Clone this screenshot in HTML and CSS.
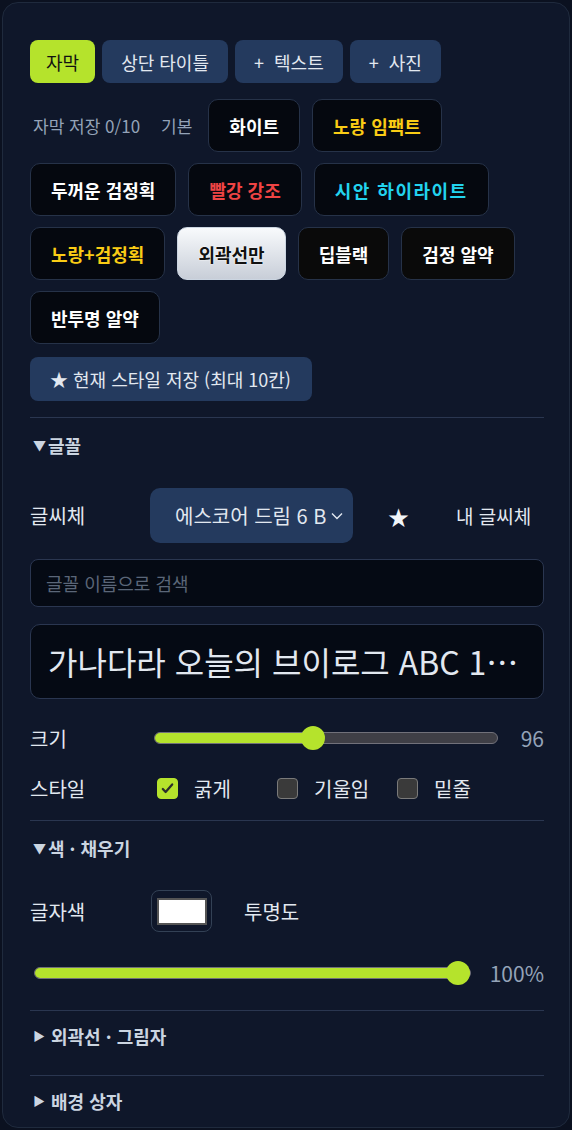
FILE: index.html
```html
<!DOCTYPE html>
<html lang="ko">
<head>
  <meta charset="UTF-8" />
  <meta name="viewport" content="width=device-width, initial-scale=1.0" />
  <title>자막 스타일</title>
  <link rel="stylesheet" href="styles.css">
</head>
<body>
  <div class="panel">
    <div class="tabs">
      <button class="tab active">자막</button>
      <button class="tab">상단 타이틀</button>
      <button class="tab">+&nbsp; 텍스트</button>
      <button class="tab">+&nbsp; 사진</button>
    </div>

    <div class="presets">
      <span class="preset-label">자막 저장 0/10</span>
      <span class="preset-label basic">기본</span>
      <button class="chip white">화이트</button>
      <button class="chip yellow">노랑 임팩트</button>
      <button class="chip white">두꺼운 검정획</button>
      <button class="chip red">빨강 강조</button>
      <button class="chip cyan">시안 하이라이트</button>
      <button class="chip yellow">노랑+검정획</button>
      <button class="chip outline">외곽선만</button>
      <button class="chip deep">딥블랙</button>
      <button class="chip deep">검정 알약</button>
      <button class="chip white">반투명 알약</button>
    </div>

    <button class="save-btn">★ 현재 스타일 저장 (최대 10칸)</button>

    <div class="section">
      <div class="section-title"><span class="caret">▼</span>글꼴</div>
      <div class="row font-row">
        <span class="label">글씨체</span>
        <div class="select">
          <span class="select-text">에스코어 드림 6 B</span>
          <svg class="chev" viewBox="0 0 12 8" width="12" height="8"><path d="M1 1.5l5 5 5-5" fill="none" stroke="#e2e8f0" stroke-width="1.4"/></svg>
        </div>
        <span class="star">★</span>
        <span class="my-font">내 글씨체</span>
      </div>
      <input class="search" type="text" placeholder="글꼴 이름으로 검색" />
      <div class="preview">가나다라 오늘의 브이로그 ABC 123</div>
      <div class="row size-row">
        <span class="label">크기</span>
        <div class="slider"><div class="fill" style="width: 46.5%"></div><div class="thumb" style="left: calc((100% - 24px) * 0.46)"></div></div>
        <span class="value">96</span>
      </div>
      <div class="row style-row">
        <span class="label">스타일</span>
        <label class="check"><span class="box on">
          <svg viewBox="0 0 16 16" width="15" height="15"><path d="M3 8.5l3 3.2 7-8" fill="none" stroke="#2b2f2b" stroke-width="2.4" stroke-linecap="round" stroke-linejoin="round"/></svg>
        </span>굵게</label>
        <label class="check"><span class="box"></span>기울임</label>
        <label class="check"><span class="box"></span>밑줄</label>
      </div>
    </div>

    <div class="section">
      <div class="section-title"><span class="caret">▼</span>색 · 채우기</div>
      <div class="row color-row">
        <span class="label">글자색</span>
        <div class="swatch"><span></span></div>
        <span class="label opacity">투명도</span>
      </div>
      <div class="row opacity-row">
        <div class="slider wide"><div class="fill" style="width: 100%"></div><div class="thumb" style="left: calc(100% - 24px)"></div></div>
        <span class="value">100%</span>
      </div>
    </div>

    <div class="section">
      <div class="section-title closed"><span class="caret">▶</span>외곽선 · 그림자</div>
    </div>

    <div class="section">
      <div class="section-title closed"><span class="caret">▶</span>배경 상자</div>
    </div>
  </div>
</body>
</html>
```

FILE: styles.css
```css
body {
  font-family: "Noto Sans CJK KR", "Noto Sans", sans-serif;
  background: #0b1120;
  margin: 0;
  padding: 2px;
}
.panel {
  background: #0f172a;
  border: 1px solid #1f2a3d;
  border-radius: 16px;
  padding: 37px 25px 0 27px;
  height: 1126px;
  box-sizing: border-box;
  color: #e2e8f0;
}
button {
  font-family: inherit;
  cursor: pointer;
}
.tabs {
  display: flex;
  gap: 7px;
}
.tab {
  background: #243a5e;
  color: #e2e8f0;
  border: none;
  border-radius: 8px;
  font-size: 18px;
  height: 43px;
  padding: 0 19px;
}
.tab.active {
  background: #b5e32c;
  color: #111;
  padding: 0 16px;
}
.presets {
  display: flex;
  flex-wrap: wrap;
  align-items: center;
  gap: 11px 12px;
  margin-top: 16px;
}
.preset-label {
  color: #94a3b8;
  font-size: 17px;
  margin-left: 3px;
}
.preset-label.basic {
  margin-left: 9px;
  margin-right: 4px;
}
.chip {
  height: 53px;
  padding: 0 20px;
  border-radius: 10px;
  border: 1px solid #263248;
  background: #05080f;
  font-size: 18px;
  font-weight: bold;
  color: #fff;
}
.chip.yellow { color: #facc15; }
.chip.red { color: #ef4444; }
.chip.cyan {
  color: #22d3ee;
  letter-spacing: 1.5px;
}
.chip.deep { background: #0a0a0a; }
.chip.outline {
  background: linear-gradient(#f8fafc, #c8ced8);
  border-color: #cbd5e1;
  color: #111;
  text-shadow: 0 0 1px #fff, 0 0 2px #fff;
}
.save-btn {
  margin-top: 13px;
  background: #243a5e;
  color: #e2e8f0;
  border: none;
  border-radius: 8px;
  font-size: 18px;
  height: 44px;
  padding: 0 21px 0 20px;
}
.section {
  border-top: 1px solid #2a3650;
  margin-top: 16px;
}
.section-title {
  color: #cbd5e1;
  font-size: 18px;
  line-height: 26px;
  height: 26px;
  font-weight: 600;
  margin: 14px 0 0 3px;
  display: flex;
  align-items: center;
}
.caret {
  font-size: 13px;
  width: 15px;
}
.section-title.closed {
  margin: 12px 0 26px 3px;
}
.section-title.closed .caret {
  font-size: 12px;
  width: 18px;
}
.row {
  display: flex;
  align-items: center;
}
.label {
  font-size: 20px;
  color: #e2e8f0;
  width: 120px;
  flex: none;
}
.font-row {
  margin-top: 30px;
}
.select {
  width: 203px;
  height: 55px;
  box-sizing: border-box;
  background: #243a5e;
  border-radius: 10px;
  padding: 0 24px 0 25px;
  display: flex;
  align-items: center;
  position: relative;
}
.select-text {
  font-size: 20px;
  white-space: nowrap;
}
.chev {
  position: absolute;
  right: 10px;
  top: 24px;
}
.star {
  font-size: 21px;
  color: #f1f5f9;
  margin-left: 35px;
}
.my-font {
  font-size: 19px;
  margin-left: 47px;
}
.search {
  display: block;
  width: 100%;
  box-sizing: border-box;
  margin-top: 16px;
  height: 48px;
  background: #050a14;
  border: 1px solid #2a3650;
  border-radius: 8px;
  padding: 0 15px;
  font-family: inherit;
  font-size: 18px;
  color: #e2e8f0;
}
.search::placeholder {
  color: #5b6678;
}
.preview {
  margin-top: 17px;
  height: 75px;
  box-sizing: border-box;
  background: #050a14;
  border: 1px solid #2a3650;
  border-radius: 10px;
  padding: 0 24px 0 17px;
  font-size: 32px;
  line-height: 73px;
  white-space: nowrap;
  overflow: hidden;
  text-overflow: ellipsis;
}
.size-row {
  margin-top: 26px;
  height: 26px;
}
.slider {
  position: relative;
  width: 344px;
  height: 12px;
  box-sizing: border-box;
  border: 1px solid #71717a;
  background: #3f3f46;
  border-radius: 6px;
  margin-left: 4px;
}
.slider .fill {
  height: 100%;
  background: #b5e32c;
  border-radius: 6px;
}
.slider .thumb {
  position: absolute;
  top: 50%;
  width: 24px;
  height: 24px;
  margin-top: -12px;
  border-radius: 50%;
  background: #b5e32c;
}
.value {
  margin-left: auto;
  font-size: 21px;
  color: #94a3b8;
}
.style-row {
  margin: 24px 0 19px;
  height: 26px;
}
.style-row .label {
  width: 127px;
}
.check {
  display: flex;
  align-items: center;
  font-size: 20px;
  color: #e2e8f0;
  width: 120px;
}
.box {
  width: 21px;
  height: 21px;
  box-sizing: border-box;
  border: 1px solid #7a7a7a;
  border-radius: 4px;
  background: #3a3a3a;
  margin-right: 16px;
  display: flex;
  align-items: center;
  justify-content: center;
}
.box.on {
  background: #b5e32c;
  border-color: #b5e32c;
}
.color-row {
  margin-top: 29px;
}
.swatch {
  width: 61px;
  height: 42px;
  margin-left: 1px;
  box-sizing: border-box;
  border: 1px solid #334155;
  border-radius: 8px;
  display: flex;
  align-items: center;
  justify-content: center;
}
.swatch span {
  width: 50px;
  height: 27px;
  box-sizing: border-box;
  background: #fff;
  border: 2px solid #555;
}
.label.opacity {
  margin-left: 32px;
}
.opacity-row {
  margin: 28px 0 24px;
  height: 26px;
}
.slider.wide {
  width: 437px;
}
```
